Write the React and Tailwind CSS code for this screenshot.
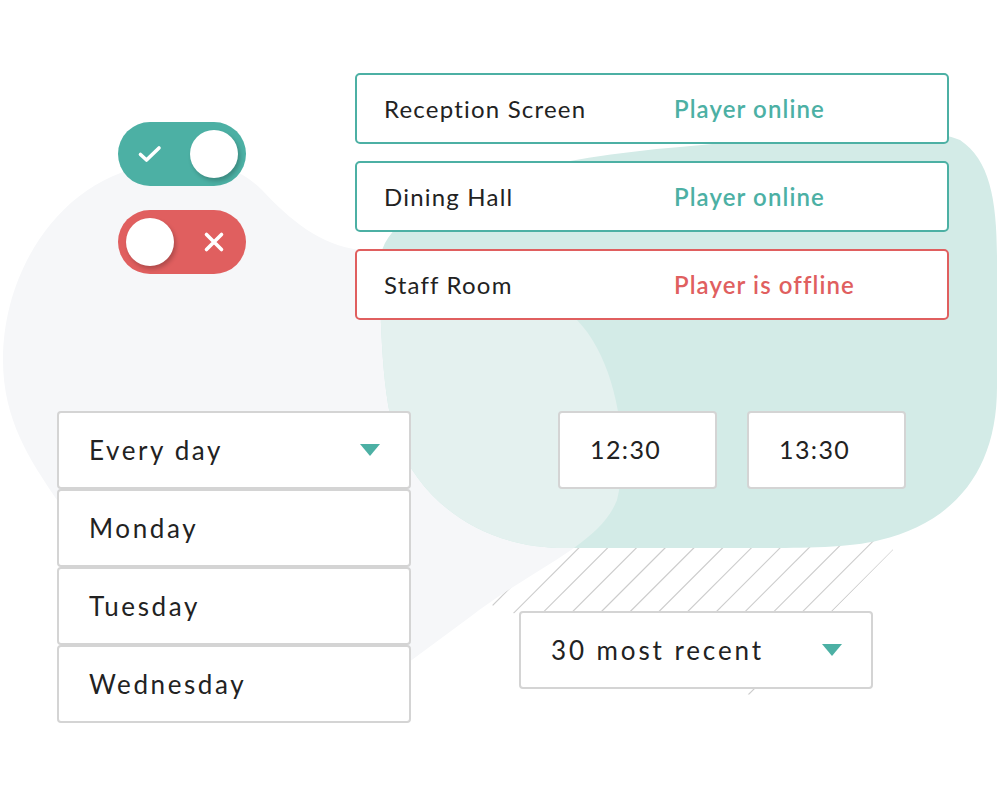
import React from 'react';

const TEAL = '#4cb0a4';

const statuses = [
    { name: 'Reception Screen', label: 'Player online', online: true },
    { name: 'Dining Hall', label: 'Player online', online: true },
    { name: 'Staff Room', label: 'Player is offline', online: false },
];

const days = ['Every day', 'Monday', 'Tuesday', 'Wednesday'];

// hatch lines run along x + y = c
const hatch = [];
for (let c = 1098; c <= 1444; c += 28.75) hatch.push(c);

const GRAY_BLOB =
    'M 3 360 C 3 270, 60 180, 150 165 C 210 156, 240 168, 262 190 C 290 220, 320 245, 360 250 C 450 258, 540 280, 577 320 C 618 362, 630 450, 617 500 C 600 545, 530 570, 470 617 L 405 665 L 200 700 L 57 500 C 30 460, 3 420, 3 360 Z';
const TEAL_BLOB =
    'M 380 262 C 382 200, 520 160, 680 147 C 800 137, 900 116, 960 140 C 990 160, 997 200, 997 260 L 997 387 C 997 470, 955 522, 880 540 C 850 548, 800 548, 760 548 L 564 548 C 480 548, 420 500, 397 440 C 382 400, 380 320, 380 262 Z';

function Backdrop() {
    return (
        <svg className="absolute inset-0" width="1000" height="800" viewBox="0 0 1000 800">
            <defs>
                <clipPath id="hatch-area">
                    <polygon points="440,480 440,520 493,606 750,695 893,550 893,480" />
                </clipPath>
                <clipPath id="teal-area">
                    <path d={TEAL_BLOB} />
                </clipPath>
            </defs>
            <g clipPath="url(#hatch-area)" stroke="#cccccc" strokeWidth="1.2">
                {hatch.map(c => (
                    <line key={c} x1={c - 750} y1={750} x2={c - 400} y2={400} />
                ))}
            </g>
            <path d={GRAY_BLOB} fill="#f6f7f9" />
            <path d={TEAL_BLOB} fill="#d3ebe7" />
            <path d={GRAY_BLOB} fill="#e4f1ef" clipPath="url(#teal-area)" />
        </svg>
    );
}

function Toggle({ on }) {
    const knob = <div className="h-12 w-12 rounded-full bg-white shadow-[2px_3px_4px_rgba(0,0,0,0.22)]" />;
    const icon = (
        <div className="flex h-12 w-12 items-center justify-center">
            {on ? (
                <svg width="26" height="22" viewBox="0 0 26 22" fill="none" stroke="#fff" strokeWidth="3.6" strokeLinecap="round" strokeLinejoin="round">
                    <path d="M3.5 11.5 L9.5 17 L22 5" />
                </svg>
            ) : (
                <svg width="22" height="22" viewBox="0 0 22 22" fill="none" stroke="#fff" strokeWidth="3.6" strokeLinecap="round">
                    <path d="M3.5 3.5 L18.5 18.5 M18.5 3.5 L3.5 18.5" />
                </svg>
            )}
        </div>
    );
    return (
        <div className={`flex h-16 w-32 items-center justify-between rounded-full px-2 ${on ? 'bg-[#4cb0a4]' : 'bg-[#e05f5f]'}`}>
            {on ? icon : knob}
            {on ? knob : icon}
        </div>
    );
}

function Caret() {
    return (
        <svg width="20" height="12" viewBox="0 0 20 12">
            <polygon points="0,0 20,0 10,12" fill={TEAL} />
        </svg>
    );
}

function Box({ children, className = '' }) {
    return (
        <div className={`flex h-[78px] items-center rounded-[4px] border-2 border-[#d4d4d4] bg-white pl-[30px] ${className}`}>
            {children}
        </div>
    );
}

export default function App() {
    return (
        <div className="relative h-[800px] w-[1000px] overflow-hidden bg-white font-['Lato',sans-serif] text-[#222]">
            <Backdrop />
            <div className="relative flex flex-col pt-[73px]">
                <div className="flex">
                    <div className="ml-[118px] mt-[49px] flex flex-col gap-[24px]">
                        <Toggle on />
                        <Toggle on={false} />
                    </div>
                    <div className="ml-[109px] flex w-[594px] flex-col gap-[17px]">
                        {statuses.map(s => (
                            <div
                                key={s.name}
                                className={`flex h-[71px] items-center rounded-[5px] border-2 bg-white ${s.online ? 'border-[#4cb0a4]' : 'border-[#e05f5f]'}`}
                            >
                                <span className="w-[317px] pl-[27px] text-[24px] tracking-[1.2px]">{s.name}</span>
                                <span className={`text-[24px] font-semibold tracking-[1.1px] ${s.online ? 'text-[#4cb0a4]' : 'text-[#e05f5f]'}`}>{s.label}</span>
                            </div>
                        ))}
                    </div>
                </div>
                <div className="mt-[91px] flex">
                    <div className="ml-[57px] flex w-[354px] flex-col">
                        {days.map((d, i) => (
                            <Box key={d} className="justify-between pr-[29px] text-[26px] tracking-[2.6px]">
                                <span>{d}</span>
                                {i === 0 && <Caret />}
                            </Box>
                        ))}
                    </div>
                    <div className="ml-[108px] flex flex-col">
                        <div className="ml-[39px] flex gap-[30px]">
                            <Box className="w-[159px] text-[25px] tracking-[1.4px]">12:30</Box>
                            <Box className="w-[159px] text-[25px] tracking-[1.4px]">13:30</Box>
                        </div>
                        <div className="mt-[122px] w-[354px]">
                            <Box className="justify-between pr-[29px] text-[26px] tracking-[2.9px]">
                                <span>30 most recent</span>
                                <Caret />
                            </Box>
                        </div>
                    </div>
                </div>
            </div>
        </div>
    );
}
